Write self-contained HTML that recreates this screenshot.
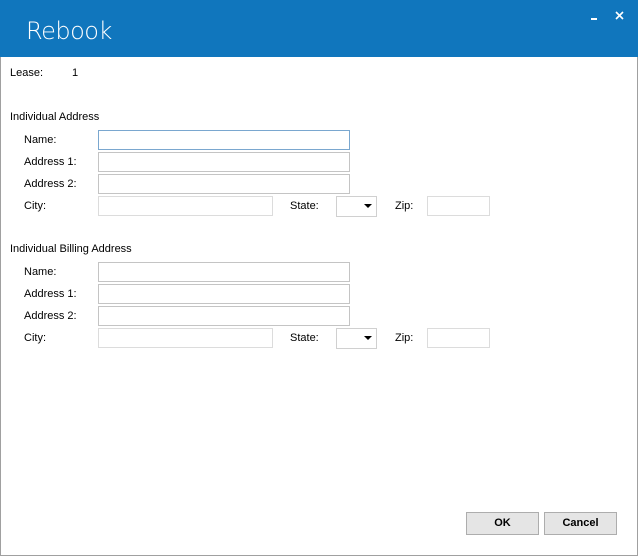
<!DOCTYPE html>
<html><head><style>
body{margin:0;width:638px;height:557px;overflow:hidden;background:#fff;font-family:"Liberation Sans",Arial,sans-serif;font-size:11px;color:#000}
.win{position:absolute;left:0;top:0;width:636px;height:555px;border:1px solid #a0a0a0;border-top:none}
.hdr{position:absolute;left:0;top:0;width:638px;height:57px;background:#1076bd}
.title{position:absolute;left:26px;top:17px;color:#fff;font-size:24px;font-family:"DejaVu Sans","Liberation Sans",sans-serif;font-weight:200;letter-spacing:-0.5px}
.t{position:absolute;white-space:nowrap}
.in{position:absolute;box-sizing:border-box;border:1px solid #c4c4c4;background:#fff;height:20px}
.btn{position:absolute;box-sizing:border-box;border:1px solid #adadad;background:#e5e5e5;height:23px;width:73px;top:512px;font-weight:bold;font-size:11px;text-align:center;line-height:21px}
</style></head><body>
<div class="win"></div>
<div class="hdr">
<div class="title">Rebook</div>
<div style="position:absolute;left:591px;top:18px;width:6px;height:2px;background:#fff"></div>
<svg style="position:absolute;left:615px;top:11px" width="9" height="9"><path d="M1 1L8 8M8 1L1 8" stroke="#fff" stroke-width="1.6"/></svg>
</div>
<div class="t" style="left:10px;top:67px">Lease:</div>
<div class="t" style="left:72px;top:67px">1</div>

<div class="t" style="left:10px;top:111px">Individual Address</div>
<div class="t" style="left:24px;top:134px">Name:</div>
<div class="t" style="left:24px;top:156px">Address 1:</div>
<div class="t" style="left:24px;top:178px">Address 2:</div>
<div class="t" style="left:24px;top:200px">City:</div>
<div class="in" style="left:98px;top:130px;width:252px;border-color:#7aa7cf"></div>
<div class="in" style="left:98px;top:152px;width:252px"></div>
<div class="in" style="left:98px;top:174px;width:252px"></div>
<div class="in" style="left:98px;top:196px;width:175px;border-color:#dcdcdc"></div>
<div class="t" style="left:290px;top:200px">State:</div>
<div class="in" style="left:336px;top:196px;width:41px;height:21px;border-color:#d0d0d0"></div>
<svg style="position:absolute;left:364px;top:204px" width="8" height="5"><path d="M0 0H8L4 4Z" fill="#000"/></svg>
<div class="t" style="left:395px;top:200px">Zip:</div>
<div class="in" style="left:427px;top:196px;width:63px;border-color:#dcdcdc"></div>

<div class="t" style="left:10px;top:243px">Individual Billing Address</div>
<div class="t" style="left:24px;top:266px">Name:</div>
<div class="t" style="left:24px;top:288px">Address 1:</div>
<div class="t" style="left:24px;top:310px">Address 2:</div>
<div class="t" style="left:24px;top:332px">City:</div>
<div class="in" style="left:98px;top:262px;width:252px"></div>
<div class="in" style="left:98px;top:284px;width:252px"></div>
<div class="in" style="left:98px;top:306px;width:252px"></div>
<div class="in" style="left:98px;top:328px;width:175px;border-color:#dcdcdc"></div>
<div class="t" style="left:290px;top:332px">State:</div>
<div class="in" style="left:336px;top:328px;width:41px;height:21px;border-color:#d0d0d0"></div>
<svg style="position:absolute;left:364px;top:336px" width="8" height="5"><path d="M0 0H8L4 4Z" fill="#000"/></svg>
<div class="t" style="left:395px;top:332px">Zip:</div>
<div class="in" style="left:427px;top:328px;width:63px;border-color:#dcdcdc"></div>

<div class="btn" style="left:466px">OK</div>
<div class="btn" style="left:544px">Cancel</div>
</body></html>
